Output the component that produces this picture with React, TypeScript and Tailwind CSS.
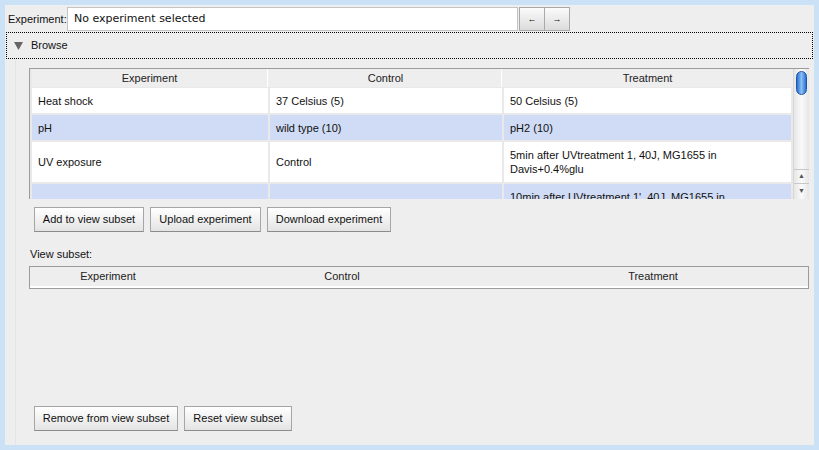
import React from "react";

const rows = [
  { exp: "Heat shock", ctrl: "37 Celsius (5)", treat: ["50 Celsius (5)"], sel: false, h: "h-[25px]" },
  { exp: "pH", ctrl: "wild type (10)", treat: ["pH2 (10)"], sel: true, h: "h-[25px]" },
  { exp: "UV exposure", ctrl: "Control", treat: ["5min after UVtreatment 1, 40J, MG1655 in", "Davis+0.4%glu"], sel: false, h: "h-[40px]" },
  { exp: "", ctrl: "", treat: ["10min after UVtreatment 1', 40J, MG1655 in", "Davis+0.4%glu"], sel: true, h: "h-[40px]" },
];

const Btn = ({ label, w }: { label: string; w: string }) => (
  <button className={`${w} h-[25px] border border-[#a6a6a6] border-b-[#8c8c8c] bg-gradient-to-b from-[#ffffff] to-[#e4e4e4] text-[11px] text-[#111] leading-none`}>
    {label}
  </button>
);

const ScrollBar = () => (
  <div className="w-[16px] shrink-0 flex flex-col bg-gradient-to-r from-[#e6e6e6] via-[#fafafa] to-[#e6e6e6] border-l border-[#d6d6d6]">
    <div className="flex-1 pt-[2px] flex justify-center">
      <div className="w-[11px] h-[24px] rounded-full bg-gradient-to-r from-[#2a6fd0] via-[#8cc0f5] to-[#2a6fd0] border border-[#1d56a8]" />
    </div>
    <div className="h-[14px] flex items-center justify-center border-t border-[#c8c8c8] text-[7px] text-[#555]">▲</div>
    <div className="h-[16px] flex items-center justify-center border-t border-[#c8c8c8] text-[7px] text-[#555]">▼</div>
  </div>
);

export default function App() {
  return (
    <div className="w-[819px] h-[450px] bg-[#cbe2f6] p-[5px] font-['Liberation_Sans',Arial,sans-serif] text-[#111]">
      <div className="h-full bg-[#eeeeee] flex flex-col">
        {/* experiment picker */}
        <div className="flex items-center pt-[2px] pl-[3px] h-[26px]">
          <span className="text-[11px] w-[59px] text-[#111]">Experiment:</span>
          <div className="w-[451px] h-[24px] bg-white border border-[#c4c4c4] flex items-center pl-[6px] text-[11px] font-['DejaVu_Sans',sans-serif]">
            No experiment selected
          </div>
          <div className="flex ml-[1px] h-[24px]">
            <button className="w-[26px] h-[24px] border border-[#a9a9a9] bg-gradient-to-b from-[#fbfbfb] to-[#dcdcdc] text-[9px] leading-none">←</button>
            <button className="w-[25px] h-[24px] border border-l-0 border-[#a9a9a9] bg-gradient-to-b from-[#fbfbfb] to-[#dcdcdc] text-[9px] leading-none">→</button>
          </div>
        </div>

        {/* browse toggle */}
        <div className="mt-[1px] mx-[1px] h-[27px] border border-dotted border-black flex items-center pl-[7px] gap-[8px]">
          <svg width="9" height="9" viewBox="0 0 9 9">
            <polygon points="0,1 9,1 4.5,9" fill="#666" />
          </svg>
          <span className="text-[11px]">Browse</span>
        </div>

        <div className="flex-1 flex flex-col pl-[24px] pr-[6px] border-l border-[#e4e4e4] ml-[10px]">
          {/* experiments table */}
          <div className="mt-[9px] ml-[-11px] flex h-[131px] w-[780px] border border-[#9c9c9c] border-b-0 border-r-0 bg-[#e9e9e9]">
            <div className="flex-1 overflow-hidden pl-[2px]">
              <div className="grid grid-cols-[236px_232px_287px] gap-x-[2px] h-[18px] text-[11px] text-[#222] bg-[#eeeeee]">
                <div className="flex items-center justify-center border-r border-white">Experiment</div>
                <div className="flex items-center justify-center border-r border-white">Control</div>
                <div className="flex items-center justify-center">Treatment</div>
              </div>
              <div className="flex flex-col gap-[2px] pt-[1px]">
                {rows.map((r, i) => (
                  <div key={i} className={`grid grid-cols-[236px_232px_287px] gap-x-[2px] ${r.h} text-[11px] shrink-0`}>
                    {[[r.exp], [r.ctrl], r.treat].map((lines, j) => (
                      <div key={j} className={`${r.sel ? "bg-[#d0dcf5]" : "bg-white"} flex flex-col justify-center px-[6px] leading-[14px]`}>
                        {lines.map((l, k) => (
                          <span key={k}>{l}</span>
                        ))}
                      </div>
                    ))}
                  </div>
                ))}
              </div>
            </div>
            <ScrollBar />
          </div>

          {/* browse actions */}
          <div className="flex gap-[6px] mt-[8px] ml-[-6px]">
            <Btn label="Add to view subset" w="w-[110px]" />
            <Btn label="Upload experiment" w="w-[111px]" />
            <Btn label="Download experiment" w="w-[124px]" />
          </div>

          <div className="text-[11px] mt-[14px] ml-[-10px]">View subset:</div>

          {/* subset table */}
          <div className="mt-[3px] ml-[-11px] w-[780px] h-[23px] border border-[#9c9c9c] bg-[#eeeeee] grid grid-cols-[156px_312px_1fr] text-[11px] text-[#222]">
            <div className="flex items-center justify-center border-b-2 border-white">Experiment</div>
            <div className="flex items-center justify-center border-b-2 border-white">Control</div>
            <div className="flex items-center justify-center border-b-2 border-white">Treatment</div>
          </div>

          <div className="flex-1" />

          {/* subset actions */}
          <div className="flex gap-[6px] mb-[14px] ml-[-6px]">
            <Btn label="Remove from view subset" w="w-[144px]" />
            <Btn label="Reset view subset" w="w-[108px]" />
          </div>
        </div>
      </div>
    </div>
  );
}
